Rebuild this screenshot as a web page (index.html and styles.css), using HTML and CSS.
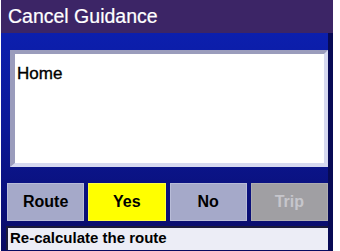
FILE: index.html
```html
<!DOCTYPE html>
<html>
<head>
<meta charset="utf-8">
<link rel="stylesheet" href="styles.css">
</head>
<body>
<div class="screen">
  <div class="titlebar">Cancel Guidance</div>
  <div class="main">
    <div class="listbox"><div class="item">Home</div></div>
    <div class="buttons">
      <div class="btn">Route</div>
      <div class="btn yes">Yes</div>
      <div class="btn">No</div>
      <div class="btn off">Trip</div>
    </div>
    <div class="status">Re-calculate the route</div>
  </div>
</div>
</body>
</html>
```
FILE: styles.css
```css
html, body {
  margin: 0;
  padding: 0;
  background: #ffffff;
}
.screen {
  width: 332px;
  height: 251px;
  margin-left: 1px;
  display: flex;
  flex-direction: column;
  font-family: "Liberation Sans", Arial, sans-serif;
  background: #0a0c6a;
}
.titlebar {
  height: 33px;
  background: #3c2566;
  color: #ffffff;
  font-size: 19.5px;
  line-height: 33px;
  padding-left: 7px;
  box-sizing: border-box;
  -webkit-text-stroke: 0.2px #ffffff;
}
.main {
  flex: 1;
  display: flex;
  flex-direction: column;
  background: linear-gradient(to bottom, #0c1fae 0%, #0b1896 45%, #0a0f78 80%, #090b62 100%);
  border-right: 5px solid #070a55;
  padding: 17px 0 0 0;
}
.listbox {
  margin: 0 0 0 9px;
  width: 318px;
  height: 117px;
  box-sizing: border-box;
  background: #ffffff;
  border-style: solid;
  border-width: 4px 4px 4px 5px;
  border-color: #9a9cbc #d6d9f0 #d6d9f0 #9a9cbc;
  padding: 10px 0 0 2px;
}
.item {
  font-size: 17px;
  color: #000000;
  line-height: 20px;
  -webkit-text-stroke: 0.35px #000000;
}
.buttons {
  margin: 16px 0 0 6px;
  display: flex;
  gap: 4px;
  width: 321px;
}
.btn {
  flex: 1;
  height: 38px;
  box-sizing: border-box;
  background: #a5a9c9;
  border: 1px solid #b8bcd8;
  color: #000000;
  font-weight: bold;
  font-size: 16px;
  display: flex;
  align-items: center;
  justify-content: center;
}
.btn.yes {
  background: #ffff00;
  border-color: #ffff40;
}
.btn.off {
  background: #a09fa3;
  border-color: #adacb0;
  color: #c6c6cc;
}
.status {
  margin: 5px 0 0 5px;
  height: 24px;
  box-sizing: border-box;
  background: #ecedf6;
  border-top: 2px solid #1a1a3a;
  border-left: 2px solid #1a1a3a;
  color: #000000;
  font-weight: bold;
  font-size: 15px;
  line-height: 20px;
  padding-left: 2px;
}
```
